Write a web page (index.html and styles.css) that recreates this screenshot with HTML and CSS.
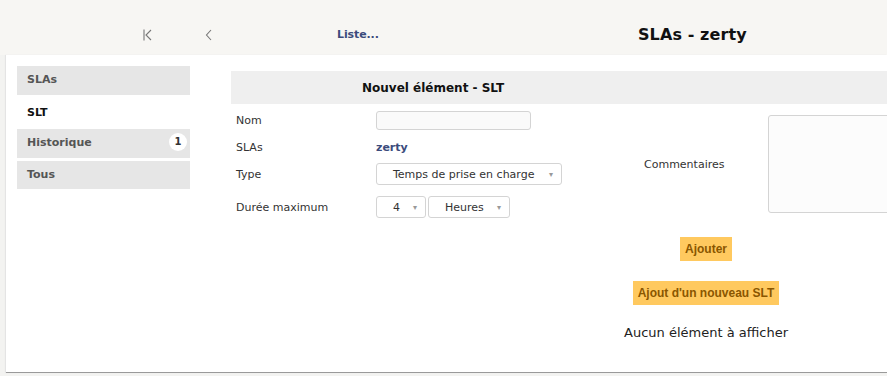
FILE: index.html
```html
<!DOCTYPE html>
<html>
  <head>
    <meta charset='UTF-8'>
    <title>SLAs - zerty</title>
    <link rel="stylesheet" href="styles.css">
  </head>
  <body>
    <div class='topbar'>
      <div class='nav nav--first'>
        <svg width='9' height='12' viewBox='0 0 9 12'><path d='M1 0.5V11.5M8 1L3 6L8 11' fill='none' stroke='#777' stroke-width='1.1'/></svg>
      </div>
      <div class='nav nav--prev'>
        <svg width='7' height='12' viewBox='0 0 7 12'><path d='M6 1L1.5 6L6 11' fill='none' stroke='#777' stroke-width='1.1'/></svg>
      </div>
      <div class='topbar__list'>Liste...</div>
      <div class='topbar__title'>SLAs - zerty</div>
    </div>

    <div class='panel'>
      <div class='tabs'>
        <div class='tab'>SLAs</div>
        <div class='tab tab--active'>SLT</div>
        <div class='tab'>Historique <span class='tab__badge'>1</span></div>
        <div class='tab'>Tous</div>
      </div>

      <div class='content'>
        <div class='form-head'>Nouvel élément - SLT</div>
        <div class='form-body'>
          <div class='fields'>
            <div class='row row--nom'>
              <div class='row__label'>Nom</div>
              <div class='input'></div>
            </div>
            <div class='row row--slas'>
              <div class='row__label'>SLAs</div>
              <div class='row__link'>zerty</div>
            </div>
            <div class='row row--type'>
              <div class='row__label'>Type</div>
              <div class='select select--type'>Temps de prise en charge <span class='select__arrow'>&#9662;</span></div>
            </div>
            <div class='row row--duree'>
              <div class='row__label'>Durée maximum</div>
              <div class='select select--num'>4 <span class='select__arrow'>&#9662;</span></div>
              <div class='select select--unit'>Heures <span class='select__arrow'>&#9662;</span></div>
            </div>
          </div>
          <div class='comments'>
            <div class='comments__label'>Commentaires</div>
            <div class='textarea'></div>
          </div>
        </div>

        <div class='actions'>
          <div class='btn'>Ajouter</div>
          <div class='btn btn--new'>Ajout d'un nouveau SLT</div>
          <div class='empty'>Aucun élément à afficher</div>
        </div>
      </div>
    </div>
  </body>
</html>
```

FILE: styles.css
```css
html,
body {
	margin: 0;
}

body {
	width: 887px;
	height: 376px;
	overflow: hidden;
	background: #f3f3f1;
	font-family: Verdana, 'DejaVu Sans', sans-serif;
	font-size: 11px;
	color: #333;
}

.topbar {
	display: flex;
	align-items: center;
	height: 55px;
	padding-top: 14px;
	box-sizing: border-box;
	background: #f7f6f3;
}

  .nav {
  	display: flex;
  	align-items: center;
  	height: 14px;
  }

  .nav--first {
  	margin-left: 143px;
  	width: 62px;
  }

  .nav--prev {
  	width: 132px;
  }

  .topbar__list {
  	width: 301px;
  	font-weight: bold;
  	color: #3b4b7c;
  	letter-spacing: -0.1px;
  }

  .topbar__title {
  	font-size: 16px;
  	font-weight: bold;
  	color: #111;
  	letter-spacing: 0.1px;
  }

.panel {
	display: flex;
	margin-left: 6px;
	height: 317px;
	background: #fff;
	border-bottom: 1px solid #9a9a9a;
	box-shadow: -1px 0 1px #e4e4e4;
}

  .tabs {
  	flex: none;
  	width: 173px;
  	margin: 11px 0 0 11px;
  }

  .tab {
  	position: relative;
  	height: 28.5px;
  	line-height: 27px;
  	margin-bottom: 3px;
  	padding-left: 10px;
  	background: #e6e6e6;
  	font-weight: bold;
  	color: #555;
  }

  .tab--active {
  	background: #fff;
  	color: #111;
  	line-height: 29px;
  }

  .tab__badge {
  	position: absolute;
  	top: 4px;
  	right: 3px;
  	width: 18px;
  	height: 18px;
  	line-height: 18px;
  	border-radius: 50%;
  	background: #fff;
  	text-align: center;
  	font-size: 10px;
  	color: #333;
  }

  .content {
  	flex: 1;
  	min-width: 0;
  	overflow: hidden;
  	margin: 16px 0 0 41px;
  }

    .form-head {
    	height: 33px;
    	line-height: 34px;
    	padding-left: 131px;
    	background: #efefef;
    	font-size: 12px;
    	font-weight: bold;
    	color: #111;
    	white-space: nowrap;
    }

    .form-body {
    	display: flex;
    	align-items: flex-start;
    }

    .fields {
    	flex: none;
    	width: 413px;
    	padding-top: 7px;
    }

      .row {
      	display: flex;
      	align-items: center;
      	padding-left: 5px;
      }

      .row__label {
      	width: 140px;
      }

      .row--nom {
      	height: 19px;
      }

      .row--slas {
      	height: 16px;
      	margin-top: 9px;
      }

      .row--type {
      	height: 22px;
      	margin-top: 8px;
      }

      .row--duree {
      	height: 22px;
      	margin-top: 11px;
      }

      .input {
      	width: 153px;
      	height: 17px;
      	border: 1px solid #d4d4d4;
      	border-radius: 3px;
      	background: #fafafa;
      }

      .row__link {
      	font-weight: bold;
      	color: #3b4b7c;
      }

      .select {
      	display: flex;
      	align-items: center;
      	justify-content: space-between;
      	height: 20px;
      	border: 1px solid #d4d4d4;
      	border-radius: 3px;
      	background: #fff;
      	color: #333;
      	white-space: nowrap;
      }

      .select--type {
      	width: 160px;
      	padding: 0 8px 0 16px;
      }

      .select--num {
      	width: 24px;
      	padding: 0 8px 0 16px;
      }

      .select--unit {
      	width: 56px;
      	margin-left: 2px;
      	padding: 0 8px 0 16px;
      }

      .select__arrow {
      	font-size: 8px;
      	color: #999;
      }

    .comments {
    	flex: none;
    	display: flex;
    	align-items: center;
    	margin-top: 11px;
    }

      .comments__label {
      	width: 124px;
      }

      .textarea {
      	width: 200px;
      	height: 96px;
      	border: 1px solid #d4d4d4;
      	border-radius: 3px;
      	background: #fcfcfc;
      }

    .actions {
    	display: flex;
    	flex-direction: column;
    	align-items: center;
    	width: 300px;
    	margin: 19px 0 0 325px;
    }

      .btn {
      	height: 24px;
      	line-height: 24px;
      	padding: 0 5px;
      	background: #ffc95f;
      	font-family: 'Liberation Sans', Arial, sans-serif;
      	font-size: 12px;
      	font-weight: bold;
      	color: #8a5600;
      }

      .btn--new {
      	margin-top: 20px;
      }

      .empty {
      	margin-top: 20px;
      	font-size: 13px;
      	color: #222;
      }
```
